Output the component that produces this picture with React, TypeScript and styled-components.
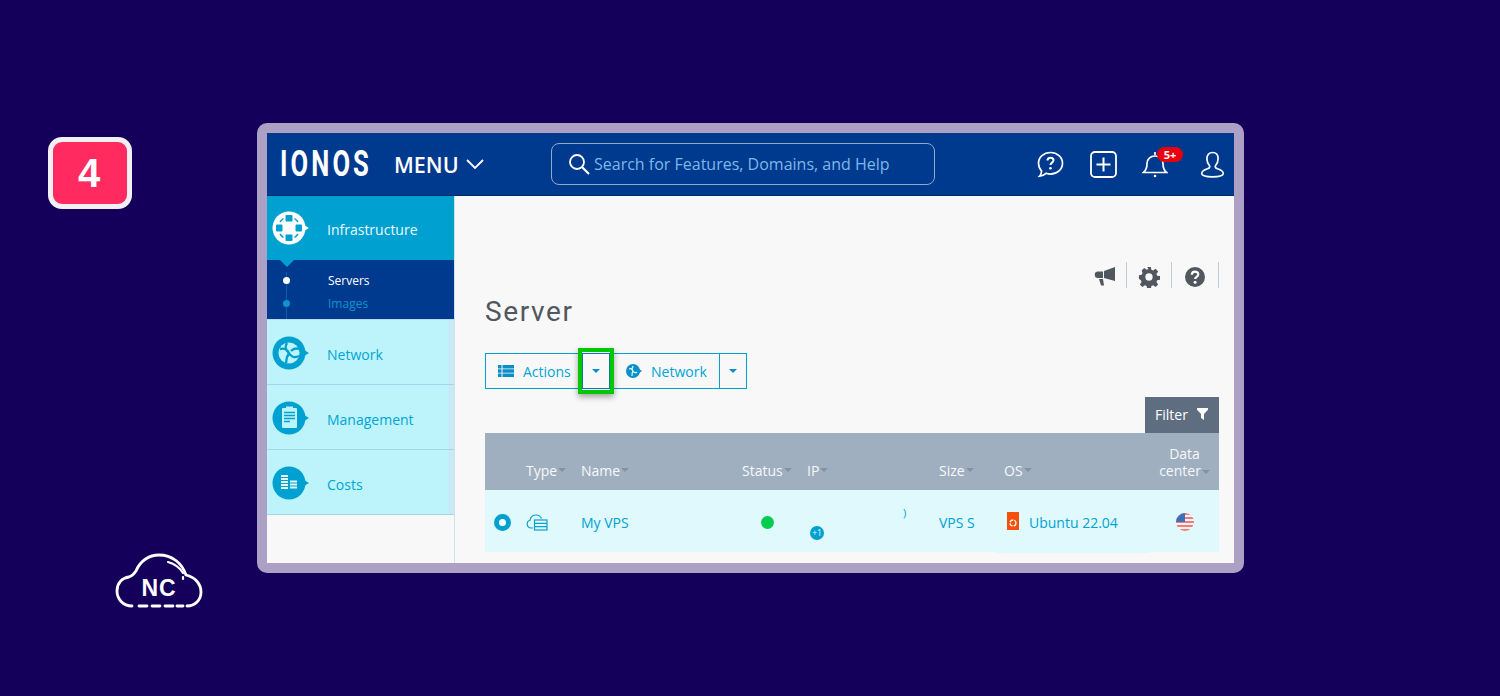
import React from 'react'
import styled, { createGlobalStyle } from 'styled-components'

const GlobalStyle = createGlobalStyle`
  html, body { margin: 0; padding: 0; background: #14005a; }
  body { font-family: 'Open Sans', 'Liberation Sans', sans-serif; }
  *, *::before, *::after { box-sizing: border-box; }
`

const Page = styled.div`
  width: 1500px;
  height: 696px;
  background: #14005a;
  display: grid;
  grid-template-columns: 257px 987px;
  padding-top: 123px;
  overflow: hidden;
`
const LeftColumn = styled.div`
  display: flex;
  flex-direction: column;
  height: 490px;
`
const StepBadge = styled.div`
  width: 84px;
  height: 72px;
  margin: 14px 0 0 48px;
  border: 5px solid #f1f1f3;
  border-radius: 14px;
  background: #ff2a60;
  color: #fff;
  font: 700 40px/62px 'Liberation Sans', sans-serif;
  text-align: center;
  text-indent: -2px;
`
const CloudLogo = styled.div`
  position: relative;
  width: 88px;
  height: 56px;
  margin: 344px 0 0 115px;
`
const CloudText = styled.span`
  position: absolute;
  left: 0;
  right: 0;
  top: 21px;
  text-align: center;
  color: #fff;
  font: 700 23px/28px 'Liberation Sans', sans-serif;
  letter-spacing: 1px;
`
const Frame = styled.div`
  width: 987px;
  height: 450px;
  border: 10px solid #aca0c4;
  border-radius: 10px;
  overflow: hidden;
  display: flex;
  flex-direction: column;
  background: #f8f8f8;
`
const TopBar = styled.header`
  height: 63px;
  flex: none;
  background: #003a8f;
  border-bottom: 1px solid #002a66;
  display: flex;
  align-items: center;
  color: #fff;
`
const Brand = styled.span`
  display: inline-block;
  width: 89px;
  margin-left: 13px;
  font: 700 37px/40px Roboto, sans-serif;
  letter-spacing: 4.5px;
  white-space: nowrap;
  transform: scaleX(0.69);
  transform-origin: left center;
`
const MenuButton = styled.div`
  display: flex;
  align-items: center;
  gap: 6px;
  margin-left: 25px;
  width: 157px;
  font-size: 21.5px;
  font-weight: 600;
`
const SearchBox = styled.div`
  width: 384px;
  height: 42px;
  border: 1px solid #8fa8d0;
  border-radius: 8px;
  display: flex;
  align-items: center;
  gap: 4px;
  padding-left: 16px;
  color: #7cb8e8;
  font-size: 16px;
`
const TopIcons = styled.div`
  display: flex;
  align-items: center;
  margin-left: 102px;
  gap: 25px;
`
const PlusIcon = styled.svg`
  margin-left: 1px;
`
const BellWrap = styled.div`
  position: relative;
  width: 28px;
  height: 28px;
  margin-right: 5px;
`
const BellBadge = styled.span`
  position: absolute;
  left: 15px;
  top: -3px;
  width: 26px;
  height: 15px;
  border-radius: 8px;
  background: #e8000d;
  color: #fff;
  font: 700 11px/15px 'Open Sans', sans-serif;
  text-align: center;
`
const Body = styled.div`
  display: flex;
  flex: 1;
  min-height: 0;
`
const Sidebar = styled.nav`
  width: 188px;
  flex: none;
  border-right: 1px solid #cfe3ea;
`
const NavItem = styled.div<{ $active?: boolean }>`
  height: ${(p) => (p.$active ? '64px' : '65px')};
  display: flex;
  align-items: center;
  gap: 16px;
  padding-left: 5px;
  padding-top: ${(p) => (p.$active ? '0' : '1px')};
  font-size: 14px;
  background: ${(p) => (p.$active ? '#00a0d0' : '#bdf3fa')};
  color: ${(p) => (p.$active ? '#ecfaff' : '#00a5d6')};
  border-bottom: ${(p) => (p.$active ? 'none' : '1px solid #9fd8e8')};
  box-shadow: inset -6px 0 0 ${(p) => (p.$active ? '#009fcb' : '#c8eaf6')};
`
const NavLabel = styled.span`
  padding-top: 3px;
`
const SubNav = styled.div`
  position: relative;
  height: 60px;
  background: #003a8f;
  border-bottom: 1px solid #b5dcec;
  padding: 9px 0 0 61px;
  &::before {
    content: '';
    position: absolute;
    left: 13px;
    top: 0;
    border-left: 7px solid transparent;
    border-right: 7px solid transparent;
    border-top: 7px solid #00a0d0;
  }
  &::after {
    content: '';
    position: absolute;
    left: 19px;
    top: 12px;
    bottom: 0;
    width: 1px;
    background: #0f5ca6;
  }
`
const SubItem = styled.div<{ $current?: boolean }>`
  position: relative;
  height: 23px;
  font-size: 12px;
  line-height: 23px;
  color: ${(p) => (p.$current ? '#fff' : '#0d94cc')};
  &::before {
    content: '';
    position: absolute;
    z-index: 1;
    left: -45px;
    top: 8px;
    width: 7px;
    height: 7px;
    border-radius: 50%;
    background: ${(p) => (p.$current ? '#fff' : '#0d94cc')};
  }
`
const Main = styled.main`
  flex: 1;
  min-width: 0;
  padding: 66px 15px 0 30px;
`
const PageTools = styled.div`
  height: 26px;
  display: flex;
  justify-content: flex-end;
  align-items: stretch;
`
const PageTool = styled.div<{ $width: number; $nudge?: number }>`
  width: ${(p) => p.$width}px;
  border-right: 1px solid #c3ccd6;
  display: flex;
  align-items: center;
  justify-content: center;
  padding-top: 3px;
  padding-right: ${(p) => p.$nudge ?? 0}px;
`
const Title = styled.h1`
  margin: 6px 0 0;
  font: 400 28px/36px Roboto, sans-serif;
  letter-spacing: 1.6px;
  color: #50575f;
`
const ButtonRow = styled.div`
  display: flex;
  margin-top: 23px;
  height: 36px;
`
const SplitButton = styled.div<{ $width: number; $flush?: boolean }>`
  display: flex;
  align-items: center;
  gap: 9px;
  width: ${(p) => p.$width}px;
  height: 36px;
  padding-left: ${(p) => (p.$flush ? '16px' : '12px')};
  border: 1px solid #00a0d0;
  border-right: none;
  border-left: ${(p) => (p.$flush ? 'none' : '1px solid #00a0d0')};
  color: #00a5d6;
  font-size: 14px;
`
const CaretButton = styled.div<{ $highlight?: boolean }>`
  position: relative;
  width: 28px;
  height: 36px;
  border: 1px solid ${(p) => (p.$highlight ? '#0a78a8' : '#00a0d0')};
  display: flex;
  align-items: center;
  justify-content: center;
  ${(p) =>
    p.$highlight &&
    `&::after {
      content: '';
      position: absolute;
      left: -5px;
      top: -6px;
      width: 36px;
      height: 46px;
      border: 4px solid #00c800;
      box-shadow: 0 3px 6px rgba(0, 0, 0, 0.35);
    }`}
`
const Caret = styled.span<{ $muted?: boolean }>`
  display: inline-block;
  width: 0;
  height: 0;
  border-left: 4.5px solid transparent;
  border-right: 4.5px solid transparent;
  border-top: 4px solid ${(p) => (p.$muted ? '#8a8f9f' : '#0a8fc8')};
`
const FilterRow = styled.div`
  display: flex;
  justify-content: flex-end;
  margin-top: 8px;
`
const FilterButton = styled.div`
  width: 74px;
  height: 36px;
  background: #5f6d80;
  color: #fff;
  font-size: 14px;
  display: flex;
  align-items: center;
  gap: 9px;
  padding: 0 0 2px 10px;
`
const Columns = `41px 55px 161px 65px 132px 65px 146px 69px`
const TableHead = styled.div`
  display: grid;
  grid-template-columns: ${Columns};
  height: 57px;
  background: #a0afbf;
  color: #f6f8fa;
  font-size: 14px;
`
const HeadCell = styled.div`
  display: flex;
  align-items: flex-end;
  gap: 1px;
  padding-bottom: 11px;
  line-height: 17px;
`
const HeadCaret = styled(Caret)`
  margin-bottom: 7px;
`
const DataCenterHead = styled(HeadCell)`
  flex-direction: column;
  justify-content: flex-end;
  align-items: center;
  gap: 0;
  padding-right: 9px;
  padding-left: 9px;
  white-space: nowrap;
`
const InlineCaret = styled(Caret)`
  vertical-align: middle;
  margin-left: 1px;
`
const TableRow = styled.div`
  display: grid;
  grid-template-columns: ${Columns};
  height: 62px;
  background: #dff9fd;
  color: #00a3d4;
  font-size: 14px;
`
const RowCell = styled.div`
  display: flex;
  align-items: center;
  padding-top: 2px;
`
const Radio = styled.span`
  width: 17px;
  height: 17px;
  margin-left: 9px;
  border: 5px solid #00a0d0;
  border-radius: 50%;
  background: #fff;
`
const StatusDot = styled.span`
  width: 13px;
  height: 13px;
  margin-left: 19px;
  border-radius: 50%;
  background: #00cc4e;
`
const IpCell = styled.div`
  position: relative;
`
const IpFragment = styled.span`
  position: absolute;
  left: 96px;
  top: 15px;
  font-size: 11px;
  line-height: 16px;
`
const MoreIps = styled.span`
  position: absolute;
  left: 3px;
  top: 36px;
  width: 14px;
  height: 14px;
  border-radius: 50%;
  background: #00a0d0;
  color: #e8fbff;
  font-size: 8.5px;
  line-height: 14px;
  text-align: center;
`
const OsCell = styled(RowCell)`
  gap: 10px;
  height: 63px;
  margin-left: -8px;
  padding-left: 11px;
  background: #dff9fd;
`
const OsLogo = styled.svg`
  align-self: flex-start;
  margin-top: 20px;
`
const FlagCell = styled(RowCell)`
  padding-left: 26px;
  padding-bottom: 1px;
`

const SectionIcon = ({ fill, children }: { fill: string; children: React.ReactNode }) => (
  <svg width="39" height="34" viewBox="0 0 39 34" style={{ flex: 'none' }}>
    <circle cx="17" cy="17" r="16.5" fill={fill} />
    <path d="M32 14l5 3-5 3z" fill={fill} />
    {children}
  </svg>
)

const CloudMark = () => (
  <svg width="88" height="56" viewBox="0 0 88 56" fill="none" stroke="#fff" strokeWidth="2.8" strokeLinecap="round">
    <path d="M17 53C8 53 2 46 2 38c0-8 5-13 12-14 3-1 5-3 7-6C25 8 34 2 44 2c13 0 23 8 27 20 9 2 15 9 15 17 0 8-6 14-14 14" />
    <path d="M24 53h8M37 53h8M50 53h8M62 53h6" />
    <path d="M53 9c7 2 12 6 15 11M68 24v2" strokeWidth="2.2" />
  </svg>
)

export default function App() {
  return (
    <Page>
      <GlobalStyle />
      <LeftColumn>
        <StepBadge>4</StepBadge>
        <CloudLogo>
          <CloudMark />
          <CloudText>NC</CloudText>
        </CloudLogo>
      </LeftColumn>
      <Frame>
        <TopBar>
          <Brand>IONOS</Brand>
          <MenuButton>
            MENU
            <svg width="20" height="12" viewBox="0 0 20 12" fill="none" stroke="#fff" strokeWidth="1.8">
              <path d="M2 2l8 8 8-8" />
            </svg>
          </MenuButton>
          <SearchBox>
            <svg width="22" height="22" viewBox="0 0 22 22" fill="none" stroke="#fff" strokeWidth="1.8">
              <circle cx="9" cy="9" r="7" />
              <path d="M14 14l7 7" strokeWidth="2.2" />
            </svg>
            Search for Features, Domains, and Help
          </SearchBox>
          <TopIcons>
            <svg width="27" height="27" viewBox="0 0 27 27" fill="none" stroke="#fff" strokeWidth="1.7">
              <path d="M13.5 1.5c6.8 0 12 4.8 12 10.8s-5.2 10.8-12 10.8c-1.600 0-3-.3-4.400-.8-1.700 1.500-4 2.600-6.600 2.900 1.300-1.500 2-3.300 2.100-5.200C2.900 18.100 1.500 15.300 1.500 12.300 1.500 6.300 6.700 1.500 13.500 1.500z" />
              <path d="M10.500 9.500c0-1.700 1.300-2.800 3-2.800s3 1.100 3 2.600c0 2.300-3 2.300-3 4.700" strokeWidth="2" />
              <circle cx="13.500" cy="17.300" r="1.300" fill="#fff" stroke="none" />
            </svg>
            <PlusIcon width="27" height="27" viewBox="0 0 27 27" fill="none" stroke="#fff" strokeWidth="1.8">
              <rect x="1" y="1" width="25" height="25" rx="4" />
              <path d="M13.500 6.500v14M6.500 13.500h14" strokeWidth="2" />
            </PlusIcon>
            <BellWrap>
              <svg width="26" height="28" viewBox="0 0 26 28" fill="none" stroke="#fff" strokeWidth="1.7">
                <path d="M1.500 22.500c2.500-2 3.500-4 3.500-9 0-4.500 3.500-7.500 8-7.500s8 3 8 7.500c0 5 1 7 3.500 9z" />
                <path d="M13 2v3" />
                <circle cx="13" cy="26" r="1.300" fill="#fff" stroke="none" />
              </svg>
              <BellBadge>5+</BellBadge>
            </BellWrap>
            <svg width="25" height="27" viewBox="0 0 25 27" fill="none" stroke="#fff" strokeWidth="1.7">
              <path d="M12.500 1.500c3.600 0 5.600 2.600 5.600 6.200 0 3-1.100 5.300-2.600 7-.8 1.300.1 2.400 2 3.100 3.400 1.100 5.800 2.500 5.800 4.700 0 2-2.500 3.300-10.800 3.300S1.700 24.500 1.700 22.500c0-2.200 2.400-3.600 5.800-4.700 1.900-.7 2.800-1.800 2-3.100-1.500-1.700-2.600-4-2.600-7 0-3.600 2-6.200 5.600-6.200z" />
            </svg>
          </TopIcons>
        </TopBar>
        <Body>
          <Sidebar>
            <NavItem $active>
              <SectionIcon fill="#fff">
                <g fill="#00a0d0">
                  <rect x="13.500" y="4" width="7" height="6.500" rx="1" />
                  <rect x="13.500" y="23.500" width="7" height="6.500" rx="1" />
                  <rect x="4" y="13.500" width="6.500" height="7" rx="1" />
                  <rect x="23.500" y="13.500" width="6.500" height="7" rx="1" />
                </g>
                <path d="M8 11c1-1.500 2-2.500 3.500-3.500M26 11c-1-1.500-2-2.500-3.500-3.500M8 23c1 1.500 2 2.500 3.500 3.500M26 23c-1 1.500-2 2.500-3.500 3.500" stroke="#00a0d0" strokeWidth="1.500" fill="none" />
              </SectionIcon>
              <NavLabel>Infrastructure</NavLabel>
            </NavItem>
            <SubNav>
              <SubItem $current>Servers</SubItem>
              <SubItem>Images</SubItem>
            </SubNav>
            <NavItem>
              <SectionIcon fill="#00a0d0">
                <circle cx="17" cy="17" r="10.500" fill="#bdf3fa" />
                <path d="M8 13c4-1 7 0 9 4s6 5 10 3M15 7c-2 3-2 7 2 10M27 13c-3-1-6 0-8 2M14 27c0-4 1-7 3-10" stroke="#00a0d0" strokeWidth="2.400" fill="none" />
              </SectionIcon>
              <NavLabel>Network</NavLabel>
            </NavItem>
            <NavItem>
              <SectionIcon fill="#00a0d0">
                <rect x="10" y="7" width="15" height="20" rx="1" fill="#bdf3fa" />
                <rect x="14" y="5.500" width="7" height="3" fill="#bdf3fa" />
                <path d="M12 11.500h11M12 14.500h11M12 17.500h11M12 20.500h6" stroke="#00a0d0" strokeWidth="1.400" />
              </SectionIcon>
              <NavLabel>Management</NavLabel>
            </NavItem>
            <NavItem>
              <SectionIcon fill="#00a0d0">
                <path d="M9 10h7M9 13h7M9 16h7M9 19h7M9 22h7M18 15.500h7M18 18.500h7M18 21.500h7" stroke="#dff9fd" strokeWidth="2" />
              </SectionIcon>
              <NavLabel>Costs</NavLabel>
            </NavItem>
          </Sidebar>
          <Main>
            <PageTools>
              <PageTool $width={36} $nudge={8}>
                <svg width="22" height="19" viewBox="0 0 22 19" fill="#50575f">
                  <path d="M21 0v14L10 11V4z" />
                  <path d="M9 4.500v6.500H4a3.250 3.250 0 0 1 0-6.500z" />
                  <path d="M5 12h4l1 6.500H7z" />
                </svg>
              </PageTool>
              <PageTool $width={45}>
                <svg width="22" height="22" viewBox="0 0 24 24" fill="#50575f">
                  <path fillRule="evenodd" d="M10 1h4l.6 3.200 1.900.8 2.700-1.900 2.800 2.800-1.900 2.700.8 1.900 3.100.5v4l-3.100.6-.8 1.900 1.900 2.700-2.800 2.800-2.700-1.900-1.900.8-.6 3.100h-4l-.6-3.100-1.900-.8-2.700 1.900-2.800-2.800 1.900-2.700-.8-1.900L1 14V10l3.100-.5.800-1.900L4 4.900l2.800-2.800 2.700 1.900 1.900-.8zM12 8a4 4 0 1 0 0 8 4 4 0 0 0 0-8z" />
                </svg>
              </PageTool>
              <PageTool $width={47}>
                <svg width="20" height="20" viewBox="0 0 20 20">
                  <circle cx="10" cy="10" r="10" fill="#50575f" />
                  <path d="M6.800 7.800c0-2 1.400-3.200 3.300-3.200s3.200 1.100 3.200 2.800c0 2.500-3.200 2.400-3.200 4.600" fill="none" stroke="#fff" strokeWidth="2.200" />
                  <circle cx="10.100" cy="15.200" r="1.500" fill="#fff" />
                </svg>
              </PageTool>
            </PageTools>
            <Title>Server</Title>
            <ButtonRow>
              <SplitButton $width={97}>
                <svg width="16" height="12" viewBox="0 0 16 12" fill="#0a8fc8">
                  <path d="M0 0h3.500v3.400H0zM4.500 0H16v3.400H4.500zM0 4.300h3.500v3.400H0zM4.500 4.300H16v3.400H4.500zM0 8.600h3.500V12H0zM4.500 8.600H16V12H4.500z" />
                </svg>
                Actions
              </SplitButton>
              <CaretButton $highlight>
                <Caret />
              </CaretButton>
              <SplitButton $width={109} $flush>
                <svg width="16" height="14" viewBox="0 0 16 14">
                  <circle cx="7" cy="7" r="7" fill="#0a8fc8" />
                  <path d="M13 5l3 2-3 2z" fill="#0a8fc8" />
                  <path d="M3 5c2-1 3 0 4 2s3 2 4 1M7 2C6 4 6 6 7 7M6 12c0-2 0-4 1-5" stroke="#dff9fd" strokeWidth="1.200" fill="none" />
                </svg>
                Network
              </SplitButton>
              <CaretButton>
                <Caret />
              </CaretButton>
            </ButtonRow>
            <FilterRow>
              <FilterButton>
                Filter
                <svg width="11" height="12" viewBox="0 0 11 12" fill="#fff">
                  <path d="M0 0h11v1.800L7 6v6L4 10V6L0 1.800z" />
                </svg>
              </FilterButton>
            </FilterRow>
            <TableHead>
              <HeadCell />
              <HeadCell>Type<HeadCaret $muted /></HeadCell>
              <HeadCell>Name<HeadCaret $muted /></HeadCell>
              <HeadCell>Status<HeadCaret $muted /></HeadCell>
              <HeadCell>IP<HeadCaret $muted /></HeadCell>
              <HeadCell>Size<HeadCaret $muted /></HeadCell>
              <HeadCell>OS<HeadCaret $muted /></HeadCell>
              <DataCenterHead>
                <span>Data</span>
                <span>center<InlineCaret $muted /></span>
              </DataCenterHead>
            </TableHead>
            <TableRow>
              <RowCell>
                <Radio />
              </RowCell>
              <RowCell>
                <svg width="22" height="17" viewBox="0 0 22 17" fill="none" stroke="#0a9fd0" strokeWidth="1.200">
                  <path d="M7 14H5a4 4 0 0 1-1-7.800C4.500 3 7 1 10 1c2.500 0 4.500 1.200 5.500 3.500" />
                  <rect x="8.500" y="6" width="12.500" height="10" fill="#dff9fd" />
                  <path d="M8.500 9.300H21M8.500 12.600H21" />
                </svg>
              </RowCell>
              <RowCell>My VPS</RowCell>
              <RowCell>
                <StatusDot />
              </RowCell>
              <IpCell>
                <IpFragment>)</IpFragment>
                <MoreIps>+1</MoreIps>
              </IpCell>
              <RowCell>VPS S</RowCell>
              <OsCell>
                <OsLogo width="12" height="18" viewBox="0 0 12 18">
                  <rect width="12" height="18" fill="#f4500a" />
                  <circle cx="6" cy="11" r="3" fill="none" stroke="#fff" strokeWidth="1.300" strokeDasharray="4 1" />
                </OsLogo>
                Ubuntu 22.04
              </OsCell>
              <FlagCell>
                <svg width="18" height="18" viewBox="0 0 18 18">
                  <clipPath id="flag-clip">
                    <circle cx="9" cy="9" r="9" />
                  </clipPath>
                  <g clipPath="url(#flag-clip)">
                    <rect width="18" height="18" fill="#f8f2f2" />
                    <path d="M0 1h18M0 5h18M0 9h18M0 13h18M0 17h18" stroke="#ee7d80" strokeWidth="2" />
                    <rect width="9" height="9" fill="#3f6fb5" />
                  </g>
                </svg>
              </FlagCell>
            </TableRow>
          </Main>
        </Body>
      </Frame>
    </Page>
  )
}
